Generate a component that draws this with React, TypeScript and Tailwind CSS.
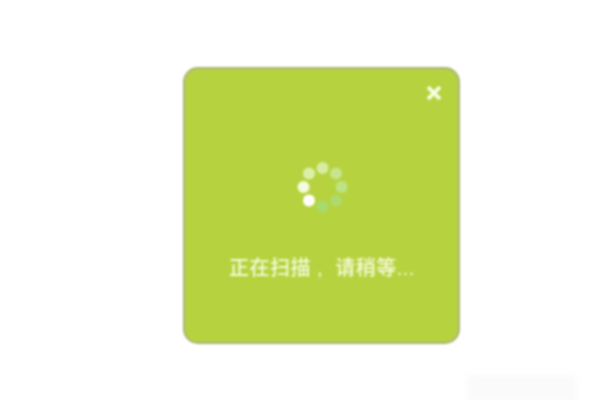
const dots = [
  { cx: 42.5, cy: 23, fill: "#d9eba2" },
  { cx: 56, cy: 28.5, fill: "#c8e48c" },
  { cx: 61.5, cy: 42, fill: "#bee285" },
  { cx: 56, cy: 55.5, fill: "#acdb6c" },
  { cx: 42.5, cy: 61.5, fill: "#a8da6c" },
  { cx: 29, cy: 55.5, fill: "#ffffff" },
  { cx: 23.5, cy: 42, fill: "#f5fbdc" },
  { cx: 29, cy: 28.5, fill: "#dcefa8" },
];

const Spinner = () => (
  <svg width="84" height="84" viewBox="0 0 84 84">
    {dots.map((d) => (
      <circle key={`${d.cx}-${d.cy}`} cx={d.cx} cy={d.cy} r="6" fill={d.fill} />
    ))}
  </svg>
);

const CloseIcon = () => (
  <svg width="16" height="16" viewBox="0 0 16 16">
    <path d="M2 2 L14 14 M14 2 L2 14" stroke="#fbfde9" strokeWidth="3.8" fill="none" />
  </svg>
);

export default function App() {
  return (
    <div className="h-[400px] w-[600px] overflow-hidden bg-white pl-[183px] pt-[67px] font-['Liberation_Sans','Noto_Sans_CJK_SC',sans-serif] blur-[1px]">
      <div className="flex h-[277px] w-[277px] flex-col rounded-[15px] border-2 border-[#a9b278] bg-[#b6d33f]">
        <div className="flex justify-end pr-[16px] pt-[16px]">
          <CloseIcon />
        </div>
        <div className="mt-[44px] flex justify-center pl-[1px]">
          <Spinner />
        </div>
        <p className="mt-[26px] whitespace-pre pl-[44px] text-[20px] font-medium leading-[26px] tracking-[0.5px] text-[#f6fadb]">
          正在扫描 ,  请稍等...
        </p>
      </div>
      <div className="ml-[284px] mt-[32px] h-[40px] w-[110px] bg-[#fafafa] blur-[3px]" />
    </div>
  );
}
